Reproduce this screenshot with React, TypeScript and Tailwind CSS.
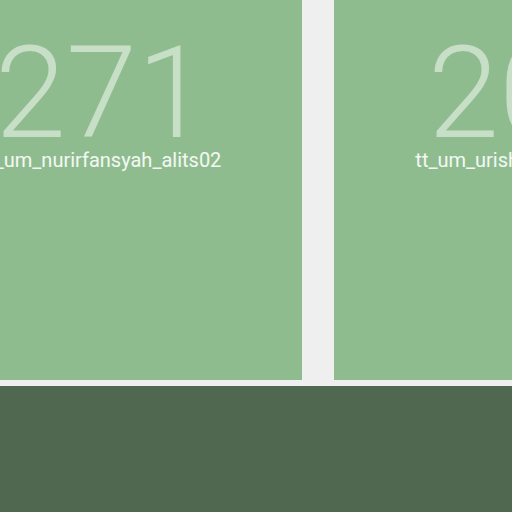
const cards = [
    {count: "271", name: "tt_um_nurirfansyah_alits02"},
    {count: "206", name: "tt_um_urish_sic_shuttle_v2"},
];

const App = () => {
    return (
        <div className="w-[512px] h-[512px] overflow-hidden bg-[#efefef] font-['Roboto',sans-serif]">
            <div className="flex gap-8 -ml-[99px] pb-[6px]">
                {cards.map((card) => (
                    <div key={card.name} className="w-[401px] shrink-0 h-[380px] bg-[#8fbc8f] pt-[43px] flex flex-col items-center">
                        <span className="text-[128px] leading-[100px] font-light text-white/50">{card.count}</span>
                        <span className="mt-[3px] text-xl leading-7 text-white/90 whitespace-nowrap">{card.name}</span>
                    </div>
                ))}
            </div>
            <footer className="h-[200px] bg-[#4f684f]" />
        </div>
    );
};

export default App;
